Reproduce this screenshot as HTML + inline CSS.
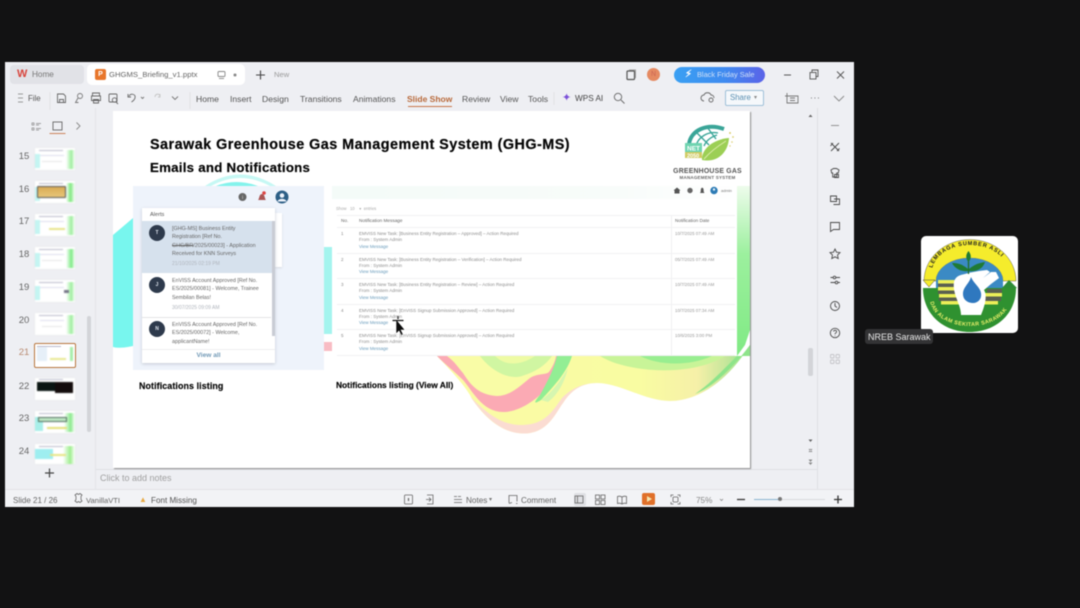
<!DOCTYPE html>
<html><head><meta charset="utf-8">
<style>
html,body{margin:0;padding:0;background:#121213;width:1080px;height:608px;overflow:hidden}
#w{position:relative;width:1080px;height:608px;overflow:hidden;font-family:"Liberation Sans",sans-serif;filter:blur(.4px)}
.a{position:absolute}
.t{position:absolute;white-space:nowrap;line-height:12px;color:#444;font-size:9px}
.m{font-size:8.600px;color:#555;top:93px}
.n{font-size:9.500px;color:#666;left:18px;width:12px;text-align:center;margin-top:2px}
.th{position:absolute;left:35px;width:40px;height:22px;background:#fff;box-shadow:0 0 1px #ddd;overflow:hidden;filter:blur(.5px)}
.th i{position:absolute;display:block}
.th .g{right:0;top:2px;width:9px;height:19px;background:linear-gradient(90deg,#fff,#9fee9f 60%,#fff)}
.th .c{left:0;top:6px;width:5px;height:14px;background:#c4f5f2}
.th .l{left:4px;top:2px;width:24px;height:1px;background:#bbc}
.th .b{left:5px;top:7px;width:24px;height:1px;background:#dde}
.th .d{left:7px;top:13px;width:20px;height:1px;background:#e6e6e6}
.a1{position:absolute;left:172px;font-size:5.400px;color:#666;line-height:8.300px;white-space:nowrap;filter:blur(.25px)}
.av{position:absolute;left:149px;width:16px;height:16px;border-radius:50%;background:#2e3a4c;color:#dfe5ee;font:bold 5px/16px "Liberation Sans",sans-serif;text-align:center}
.r{position:absolute;left:359px;font-size:4.500px;line-height:6.300px;color:#8c8c8c;white-space:nowrap;filter:blur(.3px)}
.r b{font-weight:normal;color:#6a9cbc}
.no{position:absolute;left:341px;font-size:4.500px;color:#888}
.dt{position:absolute;left:675px;font-size:4.400px;color:#999;white-space:nowrap;filter:blur(.3px)}
.hr{position:absolute;left:337px;width:398px;height:1px;background:#f1f1f3}
svg{position:absolute;overflow:visible}
</style></head><body><div id="w">

<!-- window -->
<div class="a" style="left:5px;top:62px;width:849px;height:445px;background:#eeeff3"></div>
<div class="a" style="left:5px;top:490px;width:849px;height:17px;background:#f2f3f6"></div>
<div class="a" style="left:95px;top:108px;width:1px;height:382px;background:#e3e4e8"></div>
<div class="a" style="left:96px;top:469px;width:721px;height:1px;background:#dfe0e4"></div>
<div class="a" style="left:817px;top:108px;width:1px;height:382px;background:#dfe0e4"></div>
<div class="a" style="left:5px;top:489px;width:849px;height:1px;background:#e2e3e7"></div>
<div class="a" style="left:574px;top:493px;width:12px;height:13px;background:#dfe0e4;border-radius:2px"></div>

<!-- tabs -->
<div class="a" style="left:10px;top:65px;width:74px;height:19px;background:#e1e2e7;border-radius:4px"></div>
<div class="a" style="left:87px;top:64px;width:158px;height:21px;background:#fff;border-radius:5px"></div>
<div class="t" style="left:17px;top:68px;color:#d8453d;font-size:11px;font-weight:bold">W</div>
<div class="t" style="left:32px;top:69px;color:#777;font-size:8.200px">Home</div>
<div class="a" style="left:95px;top:69px;width:11px;height:11px;background:#e8762b;border-radius:2px;color:#fff;font:bold 7px/11px 'Liberation Sans',sans-serif;text-align:center">P</div>
<div class="t" style="left:109px;top:69px;font-size:7.700px;color:#666">GHGMS_Briefing_v1.pptx</div>
<div class="t" style="left:274px;top:69px;font-size:7.600px;color:#999">New</div>
<svg style="left:0;top:0" width="1080" height="608" fill="none" stroke="#666" stroke-width=".9">
 <rect x="218" y="71.500" width="7" height="5" rx="1" stroke="#888"/><path d="M219 78.500h5" stroke="#888"/>
 <circle cx="235" cy="75" r="1.500" fill="#888" stroke="none"/>
 <path d="M256 75h9M260.500 70.500v9" stroke="#444" stroke-width="1.100"/>
 <rect x="627" y="71" width="7.500" height="8.500" rx="1" stroke="#555" stroke-width="1.200"/><path d="M629 70h6.500v8" stroke="#999"/>
 <path d="M784 75h7" stroke="#444"/>
 <rect x="810" y="72.500" width="6" height="6.500" stroke="#555"/><path d="M812 72v-2h6v6.500h-2" stroke="#555"/>
 <path d="M837 71.500l7 7M844 71.500l-7 7" stroke="#555"/>
 <!-- ribbon -->
 <path d="M18 94h5M18 98h5M18 102h5" stroke="#999"/>
 <path d="M50 92v18" stroke="#e0e0e4"/>
 <path d="M57.500 94h6l2 2v6.500h-8zM59.500 102.500v-3h4v3" stroke="#666"/>
 <circle cx="80" cy="96" r="2.500" stroke="#777"/><path d="M78 98l-2.500 4.500h3" stroke="#777"/>
 <path d="M92.500 96v-3h7v3M91.500 96h9v4.500h-9zM93.500 99.500h5v3.500h-5z" stroke="#666"/>
 <rect x="109" y="94" width="8" height="8" rx="1" stroke="#666"/><circle cx="114.500" cy="100" r="2.200" stroke="#666"/><path d="M116 102l2 2" stroke="#666"/>
 <path d="M129 96c2-3 7-2 6 2-.5 2-2 3-3.500 4M128 94v3h3" stroke="#666"/>
 <path d="M141 97l1.500 1.500 1.500-1.500" stroke="#777"/>
 <path d="M160 96c-1-3-5-2-5 1M160 94v3h-2" stroke="#c4c4c4"/>
 <path d="M172 96.500l3 3 3-3" stroke="#777"/>
 <path d="M190 92v17" stroke="#e0e0e4"/>
 <path d="M554 92v13" stroke="#e0e0e4"/>
 <circle cx="618" cy="97" r="3.700" stroke="#666"/><path d="M621 100l3.500 3.500" stroke="#666"/>
 <path d="M704 101a3 3 0 0 1 0-6c1-3 6-3 7 0 2 0 3 1.500 3 3" stroke="#666"/><circle cx="711" cy="100" r="2" stroke="#666"/>
 <path d="M787 93v10h11V96h-11M790 98h5M790 100.500h5M785 96h4" stroke="#777"/>
 <path d="M811 98h.8M814.500 98h.8M818 98h.8" stroke="#666"/>
 <path d="M834 96l5 5 5-5" stroke="#888"/>
 <!-- left pane tabs -->
 <path d="M32 123h2v2h-2zM32 128h2v2h-2zM36 123.500h5M36 125h3M36 128.500h5M36 130h3" stroke="#888" stroke-width=".7"/>
 <rect x="53" y="122" width="9" height="8" stroke="#666"/>
 <path d="M49.500 133.500h16" stroke="#c8764a"/>
 <path d="M76.500 122.500l3.500 3.500-3.500 3.500" stroke="#888"/>
 <path d="M45 473h9M49.500 468.500v9" stroke="#444" stroke-width="1.200"/>
 <!-- right sidebar -->
 <g stroke="#4a4a4a" stroke-width=".9">
 <path d="M831 125.500h8" stroke="#888"/>
 <path d="M831 143l8 8M839 143l-8 8M830.500 146l2.500-3M837 151l2.500-2.500"/>
 <path d="M831 170l2.500-1.500h3l2.500 1.500-.8 3h-1.500v4h-4v-4h-1zM834.500 174.500h4v3h-4z"/>
 <path d="M830.500 196h6v5.500h-6zM834 199h5.500v5.500h-6"/>
 <path d="M830.500 222.500h9v7h-6l-3 2z"/>
 <path d="M835 249l1.500 3.200 3.500.4-2.500 2.400.7 3.500-3.200-1.700-3.200 1.700.7-3.500-2.500-2.400 3.500-.4z"/>
 <path d="M830.500 277.500h3M836 277.500h4M830.500 282.500h5M838 282.500h2"/><circle cx="834.500" cy="277.500" r="1.300"/><circle cx="836.500" cy="282.500" r="1.300"/>
 <circle cx="835" cy="306" r="4.500"/><path d="M835 303v3l2 1.500"/>
 <circle cx="835" cy="333" r="4.700"/><path d="M833.500 331.500c.5-1.800 3.500-1.500 3 .5-.3 1-1.500 1-1.500 2.200M835 335.500v.5"/>
 <g stroke="#c4c4c8"><rect x="830.500" y="354.500" width="3.500" height="3.500" rx="1"/><rect x="836" y="354.500" width="3.500" height="3.500" rx="1"/><rect x="830.500" y="360" width="3.500" height="3.500" rx="1"/><rect x="836" y="360" width="3.500" height="3.500" rx="1"/></g>
 </g>
 <!-- scroll arrows -->
 <g fill="#666" stroke="none"><path d="M810.500 114.500l2 2.500h-4zM810.500 442l2-2.500h-4z"/><path d="M808.500 449h4l-2 2.500zM808.500 452h4l-2-2.500zM808.500 459.500h4l-2 2.500zM808.500 462.500h4l-2 2.500z" opacity=".75"/></g>
 <!-- status bar -->
 <g stroke="#666" stroke-width=".8">
 <path d="M75 495l2-1.500 1.500 1 1.500-1 2 1.500-1 1.500v3l1 1.500-2 1.500-1.500-1-1.500 1-2-1.500 1-1.500v-3z"/>
 <rect x="404.500" y="495" width="8" height="9" rx="1"/><path d="M408.500 498v3" stroke-width="1.200"/>
 <path d="M427 495h6v9h-6M426 499.500h5M429 497.500l2 2-2 2"/>
 <path d="M454 496.500h3M458 496.500h3M454 499.500h8M454 502.500h8"/>
 <path d="M509 503v-7.500h8v6M512 502.500l-3 1M516 503.500h1.500"/>
 <rect x="575" y="496" width="8" height="7"/><path d="M577.500 496v7"/>
 <rect x="595.500" y="495" width="4" height="4"/><rect x="601" y="495" width="4" height="4"/><rect x="595.500" y="500.500" width="4" height="4"/><rect x="601" y="500.500" width="4" height="4"/>
 <path d="M622 497c-1.500-1-3-1-4.500-.5v7c1.500-.5 3-.5 4.500.5 1.500-1 3-1 4.500-.5v-7c-1.500-.5-3-.5-4.500.5zM622 497v7"/>
 <path d="M671 497v-2h2.500M677.500 495h2.500v2M680 502v2h-2.500M673.500 504H671v-2"/><rect x="673" y="497" width="5" height="5" rx="1"/>
 <path d="M737 499.500h8" stroke="#333" stroke-width="1.300"/>
 <path d="M720 499l1.500 1.500 1.500-1.500" stroke="#888"/>
 <path d="M834 499.500h8M838 495.500v8" stroke="#333" stroke-width="1.300"/>
 </g>
</svg>
<div class="a" style="left:642px;top:493px;width:13px;height:12px;background:#e0702a;border-radius:2px"></div>
<div class="a" style="left:646.500px;top:496px;width:0;height:0;border-left:5px solid #f4e6b0;border-top:3px solid transparent;border-bottom:3px solid transparent"></div>
<div class="a" style="left:754px;top:498.500px;width:71px;height:1px;background:#d8d9dd"></div>
<div class="a" style="left:754px;top:498.500px;width:26px;height:1.200px;background:#8ab4d0"></div>
<div class="a" style="left:778px;top:497px;width:4px;height:4px;border-radius:50%;background:#777"></div>

<!-- avatar + sale -->
<div class="a" style="left:647px;top:68px;width:13px;height:13px;border-radius:50%;background:#e58a62;color:#c65;font:7px/13px 'Liberation Sans',sans-serif;text-align:center">N</div>
<div class="a" style="left:674px;top:67px;width:91px;height:16px;border-radius:8px;background:linear-gradient(90deg,#3aa0f3,#3f8bf0 55%,#5b63e8)"></div>
<div class="t" style="left:685px;top:69px;color:#fff;font-size:10px;font-weight:bold">&#9889;&#xFE0E;</div>
<div class="t" style="left:697px;top:69px;color:#cfe0f8;font-size:7.400px">Black Friday Sale</div>

<!-- menu row -->
<div class="t" style="left:28px;top:93px;font-size:7.800px;color:#555">File</div>
<div class="t m" style="left:196px">Home</div>
<div class="t m" style="left:230px">Insert</div>
<div class="t m" style="left:262px">Design</div>
<div class="t m" style="left:300px">Transitions</div>
<div class="t m" style="left:353px">Animations</div>
<div class="t m" style="left:407px;color:#b8693a;font-weight:bold;font-size:8.500px">Slide Show</div>
<div class="a" style="left:408px;top:106px;width:44px;height:1px;background:#c8764a"></div>
<div class="t m" style="left:462px">Review</div>
<div class="t m" style="left:500px">View</div>
<div class="t m" style="left:528px">Tools</div>
<div class="t" style="left:562px;top:92px;color:#7a4fd8;font-size:11px">&#10022;</div>
<div class="t m" style="left:575px;color:#444;font-size:8.200px">WPS AI</div>
<div class="a" style="left:725px;top:90px;width:37px;height:14px;border:1px solid #9fc0d8;border-radius:2px;background:#f5f8fb"></div>
<div class="t" style="left:730px;top:92px;color:#5a8fb2;font-size:7.800px">Share</div>
<div class="t" style="left:754px;top:92px;color:#888;font-size:6px">&#9662;</div>

<!-- scrollbars -->
<div class="a" style="left:87px;top:316px;width:4px;height:116px;background:#d3d4d8;border-radius:2px"></div>
<div class="a" style="left:808px;top:348px;width:5px;height:28px;background:#d3d4d8;border-radius:2px"></div>

<!-- thumbnails -->
<div class="t n" style="top:149px">15</div>
<div class="t n" style="top:182px">16</div>
<div class="t n" style="top:214px">17</div>
<div class="t n" style="top:247px">18</div>
<div class="t n" style="top:280px">19</div>
<div class="t n" style="top:313px">20</div>
<div class="t n" style="top:345px;color:#b88a70">21</div>
<div class="t n" style="top:379px">22</div>
<div class="t n" style="top:411px">23</div>
<div class="t n" style="top:444px">24</div>
<div class="th" style="top:148px"><i class="c"></i><i class="g"></i><i class="l"></i><i class="b"></i><i class="d"></i></div>
<div class="th" style="top:181px"><i class="c"></i><i class="g" style="background:linear-gradient(90deg,#fff,#7fe87f 50%,#fff)"></i><i class="l"></i><i style="left:2px;top:5px;width:27px;height:10px;background:linear-gradient(#d9ab55,#e8c678);border:1px solid #555;border-radius:1px"></i></div>
<div class="th" style="top:214px"><i class="c"></i><i class="g"></i><i class="l"></i><i class="b"></i><i style="left:14px;top:14px;width:16px;height:2px;background:#e8e48a"></i></div>
<div class="th" style="top:247px"><i class="c"></i><i class="g" style="background:linear-gradient(90deg,#fff,#7eea85 60%,#fff)"></i><i class="l"></i><i class="b"></i><i class="d"></i></div>
<div class="th" style="top:280px"><i class="c"></i><i class="g"></i><i class="l"></i><i class="b"></i><i style="left:29px;top:10px;width:5px;height:3px;background:#778"></i></div>
<div class="th" style="top:313px"><i class="g"></i><i class="l"></i><i class="b"></i><i class="d"></i></div>
<div class="a" style="left:33.500px;top:343px;width:40px;height:23px;background:#fff;border:1.500px solid #b8763f;border-radius:2px"></div>
<div class="a" style="left:37px;top:347px;width:10px;height:14px;background:#e6eff8;filter:blur(.5px)"></div>
<div class="a" style="left:37px;top:345.500px;width:24px;height:1px;background:#bbc"></div>
<div class="a" style="left:50px;top:358px;width:16px;height:2px;background:#e8e890;filter:blur(.5px)"></div>
<div class="a" style="left:70px;top:347px;width:3px;height:14px;background:#a6eeaa;filter:blur(.5px)"></div>
<div class="th" style="top:378px"><i class="l" style="top:1px"></i><i style="left:2px;top:4px;width:18px;height:9px;background:#0a1512"></i><i style="left:20px;top:4px;width:18px;height:11px;background:#130c0c"></i></div>
<div class="th" style="top:411px"><i class="c" style="width:8px;background:#a8efe9"></i><i class="g" style="width:11px;background:linear-gradient(90deg,#fff,#8be98d 60%,#fff)"></i><i class="l"></i><i style="left:3px;top:6px;width:27px;height:3px;background:#bfe8c4;border:1px solid #4d6a5c"></i><i style="left:12px;top:16px;width:20px;height:2px;background:#e6e07a"></i></div>
<div class="th" style="top:444px;height:20px"><i class="c" style="width:18px;top:5px;height:10px;background:#9eeef0"></i><i class="g" style="width:12px;background:linear-gradient(90deg,#fff,#9fee8f 60%,#fff)"></i><i class="l"></i><i style="left:15px;top:10px;width:16px;height:2px;background:#e7e585"></i></div>

<!-- notes / status -->
<div class="t" style="left:100px;top:472px;color:#a0a0a0;font-size:9px">Click to add notes</div>
<div class="t" style="left:13px;top:494.500px;color:#666;font-size:8px">Slide 21 / 26</div>
<div class="t" style="left:86px;top:494.500px;color:#666;font-size:7.600px">VanillaVTI</div>
<div class="t" style="left:151px;top:494.500px;color:#555;font-size:8.100px">Font Missing</div>
<div class="t" style="left:139px;top:494px;color:#e8aa45;font-size:8px">&#9650;</div>
<div class="t" style="left:466px;top:494.500px;color:#666;font-size:8.200px">Notes</div>
<div class="t" style="left:489px;top:494px;color:#777;font-size:6px">&#9662;</div>
<div class="t" style="left:521px;top:494.500px;color:#666;font-size:8.100px">Comment</div>
<div class="t" style="left:696px;top:494.500px;color:#888;font-size:8.200px">75%</div>

<!-- slide -->
<div class="a" style="left:113px;top:111px;width:637px;height:357px;background:#fff;box-shadow:1px 1px 1px #8a8a8a"></div>
<svg style="left:0;top:0" width="1080" height="608">
 <defs>
  <linearGradient id="gr" x1="0" y1="0" x2="0" y2="1"><stop offset="0" stop-color="#eefcec"/><stop offset=".4" stop-color="#9cf09e"/><stop offset="1" stop-color="#80ea84"/></linearGradient>
  <linearGradient id="sw" x1="0" y1="0" x2="1" y2="0"><stop offset="0" stop-color="#fbfba6"/><stop offset=".65" stop-color="#f9fca2"/><stop offset=".83" stop-color="#f6f0a8"/><stop offset=".93" stop-color="#c2e69a"/><stop offset="1" stop-color="#84ea84"/></linearGradient>
 </defs>
 <!-- cyan blob -->
 <path d="M113 235L133 218V346Q120 349 113 347Z" fill="#78f6ee"/>
 <path d="M205 186Q240 163 276 186Z" fill="#c6f8f4"/>
 <path d="M211 186Q240 170 270 186Z" fill="#fff"/>
 <path d="M216 186Q236 178 258 186Z" fill="#84f3ec"/>
 <rect x="324" y="247" width="8" height="87" fill="#a4f4ee"/>
 <rect x="324" y="342" width="8" height="9" fill="#f8bcc4"/>
 <!-- right green -->
 <path d="M737 186H750V330L745 345L737 356Z" fill="url(#gr)"/>
 <!-- swoosh outer -->
 <path d="M437 356C452 372 464 384 473 400C482 414 500 433 523 433.500C548 434 556 412 563 403C570 392 580 383 597 383C620 383 645 401 670 401C695 401 725 385 750 345V356Z" fill="url(#sw)"/>
 <!-- rim -->
 <path d="M470 396C482 414 500 433 523 433.500C548 434 556 412 563 403C570 392 580 383 597 383C583 383 572 388 562 398C552 412 545 424 523 425C502 426 485 412 470 396Z" fill="#fbdcd2"/>
 <!-- pink band -->
 <path d="M437 356C447 366 455 372 463 380C472 390 482 412 503 412C518 412 532 402 540 395C550 382 555 370 558 356Z" fill="#fbaab4"/>
 <path d="M447 356C455 362 457 366 463 373C470 384 478 395 497 396C510 396 520 386 530 378C538 373 546 375 549 372C553 366 555 362 556 356Z" fill="#f9fca6"/>
 <path d="M480 356C492 372 510 380 522 376C535 372 545 366 552 356Z" fill="#d0f6a2"/>
 <path d="M495 356C505 366 520 366 535 356Z" fill="#eefba4"/>
 <!-- green stream -->
 <path d="M557 356C553 372 547 382 540 395C534 402 533 405 541 400C555 385 567 372 572 356Z" fill="#92ee94"/>
 <path d="M541 400C553 392 562 378 568 368C564 385 556 396 548 402Z" fill="#d6f6b0"/>
 <!-- right bands -->
 <path d="M600 356C625 372 690 378 725 356Z" fill="#c8f498"/>
 <path d="M640 356C660 366 690 366 712 356Z" fill="#98ee90"/>
 <path d="M695 394C715 386 735 365 750 345V356L737 356C725 368 710 384 695 394Z" fill="#8ee48a"/>
</svg>
<div class="t" style="left:150px;top:139px;color:#050505;font-size:14.400px;font-weight:bold;letter-spacing:.46px;-webkit-text-stroke:.2px #050505">Sarawak Greenhouse Gas Management System (GHG-MS)</div>
<div class="t" style="left:150px;top:161.500px;color:#050505;font-size:13.300px;font-weight:bold;letter-spacing:.24px;-webkit-text-stroke:.2px #050505">Emails and Notifications</div>

<!-- GHG logo -->
<svg style="left:683px;top:122px" width="54" height="44" viewBox="0 0 54 44" fill="none">
 <path d="M6 22C8 8 24 1 41 7" stroke="#3aa598" stroke-width="4"/>
 <path d="M13 24C15 15 25 9 35 11M21 24C23 19 28 15 34 13M14 11L26 23M24 5L33 17" stroke="#3aa598" stroke-width="1.400"/>
 <path d="M19 38C18 27 31 17 46 16C45 31 34 41 19 38Z" fill="#9ccf55"/>
 <path d="M21 37C27 30 35 24 43 19" stroke="#dcecaa" stroke-width="1"/>
 <rect x="2" y="21" width="17" height="15" fill="#6fd4b0"/>
 <rect x="2" y="30" width="17" height="6" fill="#cfcb62"/>
 <g fill="#dccf70"><circle cx="47" cy="11" r="1"/><circle cx="50" cy="15" r=".9"/><circle cx="49" cy="20" r=".8"/><circle cx="47" cy="24" r=".7"/></g>
 <text x="4" y="28.500" font-size="6.500" font-weight="bold" fill="#fff" font-family="Liberation Sans">NET</text>
 <text x="4" y="35.500" font-size="5.500" font-weight="bold" fill="#fff" font-family="Liberation Sans">2050</text>
</svg>
<div class="t" style="left:660px;width:95px;text-align:center;top:165.500px;color:#555;font-size:6.900px;font-weight:bold;letter-spacing:.2px">GREENHOUSE GAS</div>
<div class="t" style="left:660px;width:95px;text-align:center;top:171.500px;color:#666;font-size:4.500px;font-weight:bold;letter-spacing:.2px">MANAGEMENT SYSTEM</div>

<!-- left panel -->
<div class="a" style="left:133px;top:186px;width:191px;height:184px;background:#eef3fb"></div>
<svg style="left:0;top:0" width="1080" height="608">
 <circle cx="242.500" cy="197" r="4" fill="#666"/><text x="242.500" y="199" font-size="5" fill="#ddd" text-anchor="middle" font-family="Liberation Sans">i</text>
 <path d="M258 200c1.500-1 1-6 4-6s2.500 5 4 6zM261 201h2" fill="#a55"/><circle cx="264" cy="193" r="1.800" fill="#d44"/>
 <circle cx="282" cy="197" r="6.500" fill="#2d5f86"/><circle cx="282" cy="195.500" r="2.300" fill="#eef3fb"/><path d="M277.500 201.500c1-3.500 8-3.500 9 0" fill="#eef3fb"/>
</svg>
<div class="a" style="left:272px;top:213px;width:10px;height:54px;background:#fff;box-shadow:0 1px 2px #d5d9e0"></div>
<div class="a" style="left:142px;top:208px;width:133px;height:155px;background:#fff;box-shadow:0 1px 3px #c4c9d3"></div>
<div class="a" style="left:142px;top:221px;width:133px;height:52px;background:#d6e1ed"></div>
<div class="a" style="left:271.500px;top:221px;width:3px;height:115px;background:#c9ccd4"></div>
<div class="a" style="left:142px;top:317px;width:129px;height:1px;background:#e3e3e6"></div>
<div class="a" style="left:142px;top:349px;width:133px;height:1px;background:#eeeef0"></div>
<div class="t" style="left:150px;top:209px;font-size:5.600px;color:#555">Alerts</div>
<div class="av" style="top:225px">T</div>
<div class="av" style="top:277px">J</div>
<div class="av" style="top:321px">N</div>
<div class="a1" style="top:225px">[GHG-MS] Business Entity<br>Registration [Ref No.<br><s>GHG/BR</s>/2025/00023] - Application<br>Received for KNN Surveys</div>
<div class="a1" style="top:260px;color:#b0b5bd;font-size:5px">21/10/2025 02:19 PM</div>
<div class="a1" style="top:277px">EnVISS Account Approved [Ref No.<br>ES/2025/00081] - Welcome, Trainee<br>Sembilan Belas!</div>
<div class="a1" style="top:304px;color:#b0b5bd;font-size:5px">30/07/2025 09:09 AM</div>
<div class="a1" style="top:321px">EnVISS Account Approved [Ref No.<br>ES/2025/00072] - Welcome,<br>applicantName!</div>
<div class="t" style="left:142px;width:133px;text-align:center;top:350px;font-size:6.600px;font-weight:bold;color:#7199b6">View all</div>
<div class="t" style="left:139px;top:379.500px;color:#050505;font-size:8.900px;font-weight:bold;letter-spacing:.1px;-webkit-text-stroke:.15px #050505">Notifications listing</div>
<div class="t" style="left:336px;top:378.500px;color:#050505;font-size:8.400px;font-weight:bold;-webkit-text-stroke:.15px #050505">Notifications listing (View All)</div>

<!-- right panel -->
<div class="a" style="left:332px;top:186px;width:405px;height:170px;background:#fff"></div>
<div class="a" style="left:332px;top:186px;width:405px;height:13px;background:linear-gradient(90deg,#f4fbf8,#f8fcfa 70%,#fff)"></div>
<div class="a" style="left:671px;top:216px;width:1px;height:139px;background:#f0f0f2"></div>
<div class="hr" style="top:215px"></div><div class="hr" style="top:227px"></div><div class="hr" style="top:253px"></div><div class="hr" style="top:278px"></div><div class="hr" style="top:304px"></div><div class="hr" style="top:329px"></div><div class="hr" style="top:355px"></div>
<svg style="left:0;top:0" width="1080" height="608">
 <path d="M673.500 190.500L677 187.500l3.500 3h-1v3h-5v-3z" fill="#555"/>
 <circle cx="690" cy="190.500" r="2.700" fill="#666"/>
 <path d="M700 193h4.500l-.8-1.300c0-3-.5-4-1.500-4s-1.500 1-1.500 4z" fill="#555"/>
 <circle cx="714" cy="190.500" r="3.700" fill="#2d7bb5"/><circle cx="714" cy="189.500" r="1.200" fill="#e8f3fa"/>
 <!-- cursor -->
 <path d="M396 319l0 15 3-3 2.300 4.500 2-1-2.200-4.500h4z" fill="#0c0c0c" stroke="#fff" stroke-width=".6"/>
 <path d="M392.500 320.500h11M398 316v3" stroke="#111" stroke-width="1.300"/>
</svg>
<div class="t" style="left:721px;top:184.500px;font-size:4px;color:#777">admin</div>
<div class="t" style="left:336px;top:203px;font-size:4.200px;color:#aaa">Show &nbsp;&nbsp;10 &nbsp;&nbsp;&nbsp;&#9662;&nbsp; entries</div>
<div class="t" style="left:341px;top:215px;font-size:4.700px;color:#666">No.</div>
<div class="t" style="left:359px;top:215px;font-size:4.700px;color:#666">Notification Message</div>
<div class="t" style="left:675px;top:215px;font-size:4.700px;color:#666">Notification Date</div>
<div class="no" style="top:231px">1</div><div class="no" style="top:257px">2</div><div class="no" style="top:282px">3</div><div class="no" style="top:308px">4</div><div class="no" style="top:333px">5</div>
<div class="r" style="top:231px">EMVISS New Task: [Business Entity Registration – Approved] – Action Required<br>From : System Admin<br><b>View Message</b></div>
<div class="r" style="top:256.500px">EMVISS New Task: [Business Entity Registration – Verification] – Action Required<br>From : System Admin<br><b>View Message</b></div>
<div class="r" style="top:282px">EMVISS New Task: [Business Entity Registration – Review] – Action Required<br>From : System Admin<br><b>View Message</b></div>
<div class="r" style="top:307.500px">EMVISS New Task: [EnVISS Signup Submission Approved] – Action Required<br>From : System Admin<br><b>View Message</b></div>
<div class="r" style="top:333px">EMVISS New Task: [EnVISS Signup Submission Approved] – Action Required<br>From : System Admin<br><b>View Message</b></div>
<div class="dt" style="top:231px">10/7/2025 07:49 AM</div>
<div class="dt" style="top:256.500px">05/7/2025 07:49 AM</div>
<div class="dt" style="top:282px">10/7/2025 07:49 AM</div>
<div class="dt" style="top:307.500px">10/7/2025 07:34 AM</div>
<div class="dt" style="top:333px">10/6/2025 3:00 PM</div>

<!-- NREB tile -->
<div class="a" style="left:921px;top:236px;width:97px;height:97px;background:#fff;border-radius:5px"></div>
<svg style="left:921px;top:236px" width="97" height="97" viewBox="0 0 97 97">
 <defs>
  <path id="ta" d="M11 36A38 27 0 0 1 87 36"/>
  <path id="tb" d="M9 63A40 27 0 0 0 89 63"/>
 </defs>
 <!-- yellow arc -->
 <path d="M3 45A45.500 41 0 0 1 95 45H82A33.500 23 0 0 0 15 45Z" fill="#f5ec2c" stroke="#444" stroke-width=".4"/>
 <path d="M15 45A33.500 23 0 0 1 82 45V53H15Z" fill="#3b8ac4"/>
 <!-- green lower -->
 <path d="M2 52H95C95 78 75 96 48.500 96S2 78 2 52Z" fill="#2f9130"/>
 <!-- triangles -->
 <path d="M2 44H14L8 51Z" fill="#f5ec2c" stroke="#444" stroke-width=".5"/>
 <path d="M81 52L88 44 96 52Z" fill="#2d8c36"/>
 <!-- stripes -->
 <g fill="#ecef58"><rect x="17" y="44" width="24" height="3.500"/><rect x="17" y="51" width="22" height="3.500"/><rect x="18" y="58" width="20" height="3.500"/><rect x="20" y="65" width="20" height="3.500"/><rect x="64" y="57" width="17" height="3.500"/><rect x="62" y="65" width="15" height="3.500"/></g>
 <g fill="#5a5f50"><rect x="17" y="47.500" width="22" height="3.500"/><rect x="17" y="54.500" width="21" height="3.500"/><rect x="18" y="61.500" width="20" height="3.500"/><rect x="66" y="53" width="15" height="4"/><rect x="64" y="60.500" width="16" height="4.500"/></g>
 <!-- hand -->
 <path d="M33 46C35 38 43 39 47 37L58 35 66 34 69 36 62 42 70 36 75 36 78 42 70 48 63 54C67 60 63 72 60 79H40C40 68 31 58 33 46Z" fill="#fff"/>
 <path d="M50 41C48 48 42 51 42 58C42 64 47 67 52 67C57 67 61 63 60 57C59 51 53 48 50 41Z" fill="#2f78bf"/>
 <!-- leaves -->
 <path d="M47.500 38V18" stroke="#1f6b2a" stroke-width="1.300"/>
 <path d="M47 33C41 28 37 27 31 27C34 33 41 36 47 35ZM48 33C54 28 58 27 64 26C62 33 55 36 48 35ZM47.500 26C44 22 45 18 47.500 15C50 18 51 22 47.500 26Z" fill="#1f7a33"/>
 <text font-size="5.600" font-weight="bold" fill="#222" font-family="Liberation Sans" letter-spacing=".75"><textPath href="#ta" startOffset="4">LEMBAGA SUMBER ASLI</textPath></text>
 <text font-size="5.400" font-weight="bold" fill="#e8ee6a" font-family="Liberation Sans" letter-spacing=".4"><textPath href="#tb" startOffset="3">DAN ALAM SEKITAR SARAWAK</textPath></text>
</svg>
<div class="a" style="left:865px;top:329px;width:68px;height:15px;background:#333335;border-radius:3px"></div>
<div class="t" style="left:868px;top:330.500px;color:#e8e8e8;font-size:9px">NREB Sarawak</div>

</div></body></html>
